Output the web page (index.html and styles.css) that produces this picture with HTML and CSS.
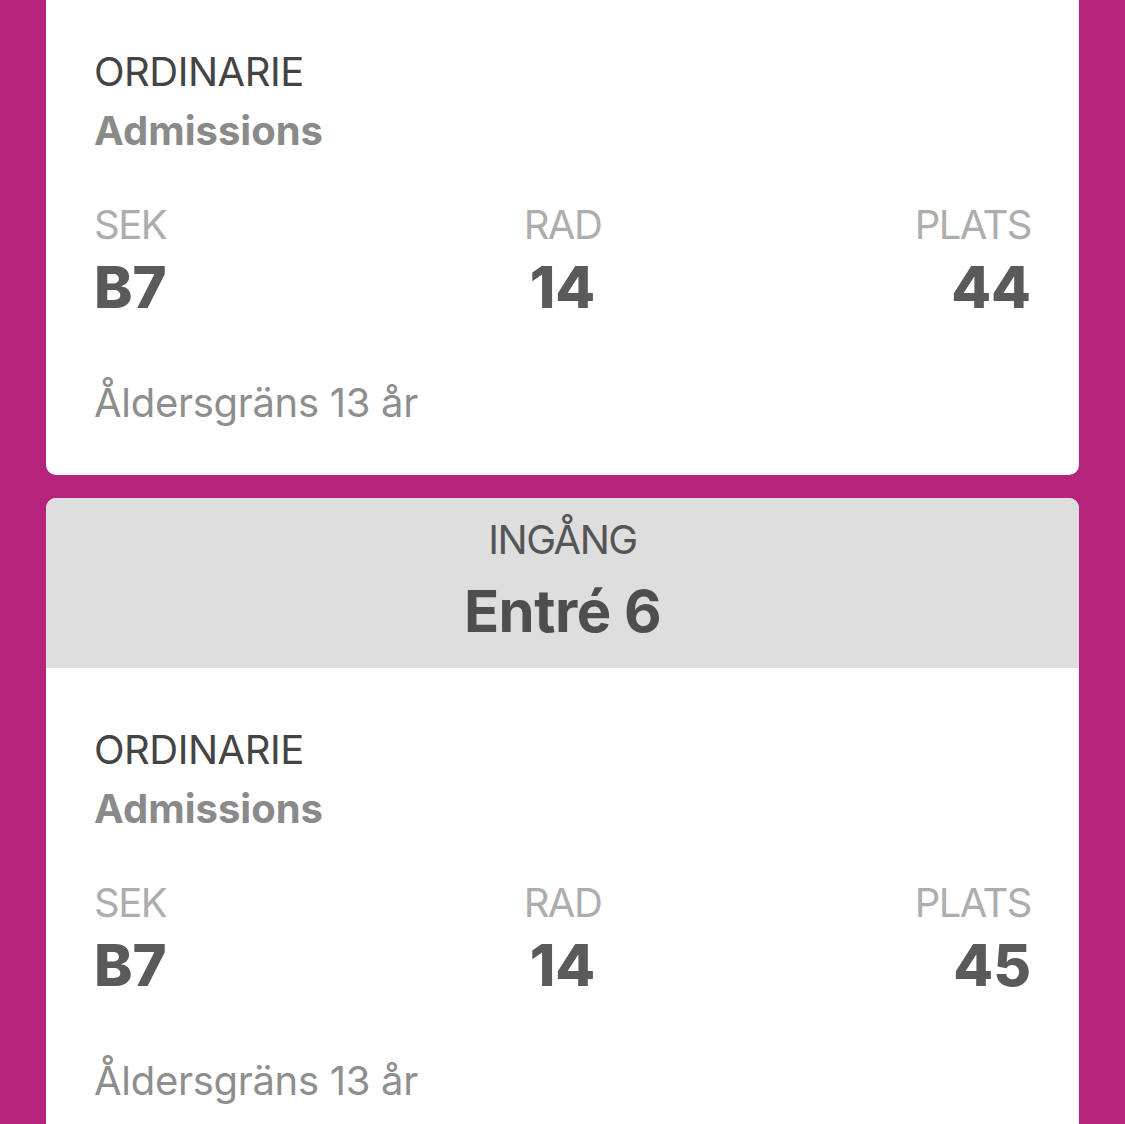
FILE: index.html
```html
<!DOCTYPE html>
<html lang="sv">
<head>
<meta charset="utf-8">
<link rel="stylesheet" href="styles.css">
<title>Biljetter</title>
</head>
<body>
<div class="page">
  <section class="card card--cut">
    <div class="body body--first">
      <div class="type">ORDINARIE</div>
      <div class="kind">Admissions</div>
      <div class="seats">
        <div class="col col--left"><div class="label">SEK</div><div class="value">B7</div></div>
        <div class="col col--center"><div class="label">RAD</div><div class="value">14</div></div>
        <div class="col col--right"><div class="label">PLATS</div><div class="value">44</div></div>
      </div>
      <div class="age">Åldersgräns 13 år</div>
    </div>
  </section>
  <section class="card">
    <div class="entry">
      <div class="entry-label">INGÅNG</div>
      <div class="entry-value">Entré 6</div>
    </div>
    <div class="body">
      <div class="type">ORDINARIE</div>
      <div class="kind">Admissions</div>
      <div class="seats">
        <div class="col col--left"><div class="label">SEK</div><div class="value">B7</div></div>
        <div class="col col--center"><div class="label">RAD</div><div class="value">14</div></div>
        <div class="col col--right"><div class="label">PLATS</div><div class="value">45</div></div>
      </div>
      <div class="age">Åldersgräns 13 år</div>
    </div>
  </section>
</div>
</body>
</html>
```

FILE: styles.css
```css
html, body {
  margin: 0;
  padding: 0;
  background: #b5247a;
  height: 1124px;
  overflow: hidden;
}
body {
  font-family: Inter, "Noto Sans", sans-serif;
}
.page {
  display: flex;
  flex-direction: column;
  gap: 23px;
  padding: 0 46px;
}
.card {
  background: #ffffff;
  border-radius: 10px;
  overflow: hidden;
}
.card--cut {
  border-radius: 0 0 10px 10px;
}
.entry {
  background: #dedede;
  display: flex;
  flex-direction: column;
  align-items: center;
  padding: 18px 0 25px;
}
.entry-label {
  font-size: 40px;
  line-height: 48px;
  color: #555555;
  letter-spacing: -1.5px;
}
.entry-value {
  margin-top: 15px;
  font-size: 58px;
  line-height: 64px;
  font-weight: 700;
  color: #4e4e4e;
  letter-spacing: -0.5px;
}
.body {
  padding: 58px 48px 48px;
}
.body--first {
  padding-top: 48px;
}
.type {
  font-size: 40px;
  line-height: 48px;
  color: #444444;
  letter-spacing: -0.5px;
}
.kind {
  margin-top: 11px;
  font-size: 40px;
  line-height: 48px;
  font-weight: 700;
  color: #8a8a8a;
}
.seats {
  margin-top: 46px;
  display: grid;
  grid-template-columns: 1fr 1fr 1fr;
}
.col {
  display: flex;
  flex-direction: column;
}
.col--left { align-items: flex-start; }
.col--center { align-items: center; }
.col--right { align-items: flex-end; }
.label {
  font-size: 40px;
  line-height: 48px;
  color: #adadad;
  letter-spacing: -1.5px;
}
.value {
  margin-top: 6px;
  font-size: 58px;
  line-height: 64px;
  font-weight: 800;
  color: #5a5a5a;
}
.age {
  margin-top: 60px;
  font-size: 40px;
  line-height: 48px;
  color: #8e8e8e;
  letter-spacing: -0.3px;
}
```
